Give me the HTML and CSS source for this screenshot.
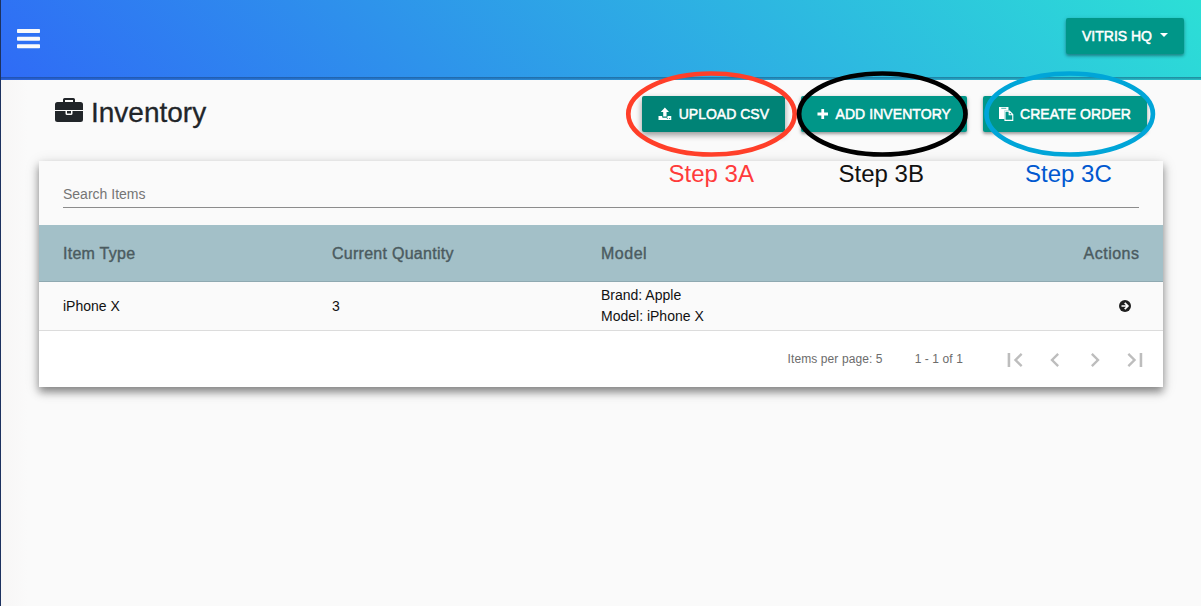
FILE: index.html
```html
<!DOCTYPE html>
<html lang="en">
<head>
<meta charset="utf-8">
<title>Inventory</title>
<link rel="stylesheet" href="styles.css">
</head>
<body>
<header class="topbar">
  <svg class="menu" width="23" height="20" viewBox="0 0 23 20" fill="#fafafa"><rect width="23" height="4" rx=".8"/><rect y="7.700" width="23" height="4" rx=".8"/><rect y="15.200" width="23" height="4" rx=".8"/></svg>
  <button class="btn account"><span class="t-account">VITRIS HQ</span><span class="caret"></span></button>
</header>
<main class="page">
  <div class="heading">
    <h1 class="title">
      <svg width="28" height="24" viewBox="0 0 28 24"><path fill="#212529" d="M8 4V1.600Q8 0 9.600 0H18.400Q20 0 20 1.600V4H25.500Q28 4 28 6.500V12H0V6.500Q0 4 2.500 4ZM10 4H18V2H10ZM0 13H10.500V15.500Q10.500 17 12 17H16Q17.500 17 17.500 15.500V13H28V21.500Q28 24 25.500 24H2.500Q0 24 0 21.500ZM12 13H16V15.500H12Z" fill-rule="evenodd"/></svg>
      <span class="t-title">Inventory</span>
    </h1>
    <div class="actions">
      <button class="btn upload">
        <svg width="14" height="14" viewBox="0 0 14 14" fill="#fff"><path d="M7 .5 11.200 5H8.700V9.500H5.300V5H2.800Z"/><path fill-rule="evenodd" d="M.5 9H4.300V10Q4.300 10.700 5 10.700H9Q9.700 10.700 9.700 10V9H13.500V13H.5ZM9 11.300V12.200H10V11.300ZM11.300 11.300V12.200H12.300V11.300Z"/></svg>
        <span class="t-upload">UPLOAD CSV</span>
      </button>
      <button class="btn add">
        <svg width="12" height="14" viewBox="0 0 12 14"><path d="M6 1.700V12.300M.5 7H11.500" stroke="#fff" stroke-width="2.900"/></svg>
        <span class="t-add">ADD INVENTORY</span>
      </button>
      <button class="btn order">
        <svg width="15" height="14" viewBox="0 0 15 14"><path fill="#fff" d="M0 0H9.500V3.500H5.500V12H0Z"/><path d="M2.300 1.300H7.300" stroke="#009688" stroke-width=".7"/><path d="M6 4.100H10.400L13.800 7.500V13.400H6ZM10.200 4.100V7.700H13.800" fill="#009688" stroke="#fff" stroke-width="1.100"/></svg>
        <span class="t-order">CREATE ORDER</span>
      </button>
    </div>
  </div>
  <section class="card">
    <div class="search"><div class="field">Search Items</div></div>
    <div class="row head"><span class="t-type">Item Type</span><span class="t-qty">Current Quantity</span><span class="t-model">Model</span><span class="t-actions">Actions</span></div>
    <div class="row item"><span>iPhone X</span><span>3</span><span>Brand: Apple<br>Model: iPhone X</span><span class="go"><svg width="12" height="12" viewBox="0 0 12 12"><circle cx="6" cy="6" r="6" fill="#1f1f1f"/><path d="M2.500 6H8.300M5.700 2.800 8.900 6 5.700 9.200" fill="none" stroke="#fff" stroke-width="1.700"/></svg></span></div>
    <div class="pager">
      <span class="per">Items per page: 5</span><span class="range">1 - 1 of 1</span>
      <div class="nav">
        <svg viewBox="0 0 24 24"><path d="M18.410 16.590 13.820 12l4.590-4.590L17 6l-6 6 6 6zM5.700 6h2.200v12H5.700z"/></svg>
        <svg viewBox="0 0 24 24"><path d="M15.410 7.410 14 6l-6 6 6 6 1.410-1.410L10.830 12z"/></svg>
        <svg viewBox="0 0 24 24"><path d="M10 6 8.590 7.410 13.170 12l-4.580 4.590L10 18l6-6z"/></svg>
        <svg viewBox="0 0 24 24"><path d="M5.590 7.410 10.180 12l-4.590 4.590L7 18l6-6-6-6zM16 6h2.200v12h-2.200z"/></svg>
      </div>
    </div>
  </section>
</main>
<svg class="notes" width="1201" height="606" viewBox="0 0 1201 606">
  <g fill="none" stroke-width="4.700">
    <ellipse cx="711.500" cy="114" rx="83.200" ry="40.500" stroke="#ff3f29"/>
    <ellipse cx="882.300" cy="114" rx="83.200" ry="40.500" stroke="#000"/>
    <ellipse cx="1069.700" cy="114" rx="83.200" ry="40.500" stroke="#00a5d8"/>
  </g>
  <g class="steps">
    <text x="668.500" y="182" fill="#ff3b3b">Step 3A</text>
    <text x="838.500" y="182" fill="#111">Step 3B</text>
    <text x="1025" y="182" fill="#0058d0">Step 3C</text>
  </g>
</svg>
</body>
</html>
```
FILE: styles.css
```css
* { box-sizing: border-box; }
body {
  margin: 0;
  height: 606px;
  overflow: hidden;
  background: linear-gradient(to right, #f7f6f6, #fafafa 28px);
  border-left: 1px solid #1c3260;
  font: 14px/21px "Liberation Sans", Arial, sans-serif;
  color: #111;
}
.topbar {
  height: 80px;
  padding: 18px 17px 0 16px;
  display: flex;
  justify-content: space-between;
  align-items: flex-start;
  background: linear-gradient(to bottom, transparent 77px, rgba(15, 50, 90, .48) 77px, rgba(25, 60, 100, .12) 80px), linear-gradient(45deg, #2f6bf6, #2cdfd6);
}
.menu { margin-top: 11px; }
.btn {
  height: 36px;
  padding: 0 16px;
  border: 0;
  border-radius: 2px;
  display: flex;
  align-items: center;
  font: 14px/20px "Liberation Sans", Arial, sans-serif;
  color: #fff;
  -webkit-text-stroke: .5px #fff;
  white-space: nowrap;
  background: #009688;
  box-shadow: 0 2px 3px rgba(0, 0, 0, .3), 0 1px 5px rgba(0, 0, 0, .15);
}
.account { width: 118px; gap: 8px; }
.t-order, .t-add { letter-spacing: .07px; }
.caret { border: 4px solid transparent; border-top-color: #fff; border-bottom: 0; margin-top: -2px; }
.page { padding: 16px 38px 0; }
.heading { height: 65px; padding: 0 16px; display: flex; justify-content: space-between; }
.title { margin: 0; height: 33px; display: flex; align-items: center; gap: 8px; font-size: 28px; line-height: 33px; font-weight: 400; color: #212529; }
.title svg { margin-top: -6px; }
.t-title { -webkit-text-stroke: .3px #212529; }
.actions { display: flex; gap: 16px; }
.upload { width: 143px; gap: 7px; background: #008376; box-shadow: 0 3px 6px rgba(0, 0, 0, .4); }
.add { width: 166px; gap: 7px; }
.order { width: 164px; gap: 6px; }
.card { box-shadow: 0 5px 8px rgba(0, 0, 0, .4), 0 3px 14px rgba(0, 0, 0, .15); background: #fff; }
.search { height: 64px; padding: 22px 24px 0; background: #fafafa; }
.field { height: 25px; border-bottom: 1px solid #8c8c8c; color: #757575; line-height: 22px; }
.row { display: grid; grid-template-columns: repeat(4, 1fr); align-items: center; padding: 0 24px; }
.row > :last-child { justify-self: end; }
.head { height: 57px; background: #a3c0c8; border-bottom: 1px solid #8fa9b1; font-size: 16px; letter-spacing: .27px; color: #4b5b60; -webkit-text-stroke: .4px #4b5b60; }
.t-model { letter-spacing: .5px; }
.t-actions { letter-spacing: .5px; margin-right: -.5px; }
.item { height: 49px; background: #fafafa; border-bottom: 1px solid #dcdcdc; }
.go { display: flex; margin-right: 8px; }
.pager { height: 56px; display: flex; justify-content: flex-end; align-items: center; font-size: 12px; letter-spacing: .1px; color: #6c6c6c; padding-right: 8px; }
.per { margin-right: 32px; }
.range { margin-right: 32px; }
.nav { display: flex; padding-top: 2px; }
.nav svg { width: 40px; height: 40px; padding: 6px; fill: #bdbdbd; }
.notes { position: absolute; left: 0; top: 0; pointer-events: none; }
.steps { font: 24px "Liberation Sans", Arial, sans-serif; }
```
